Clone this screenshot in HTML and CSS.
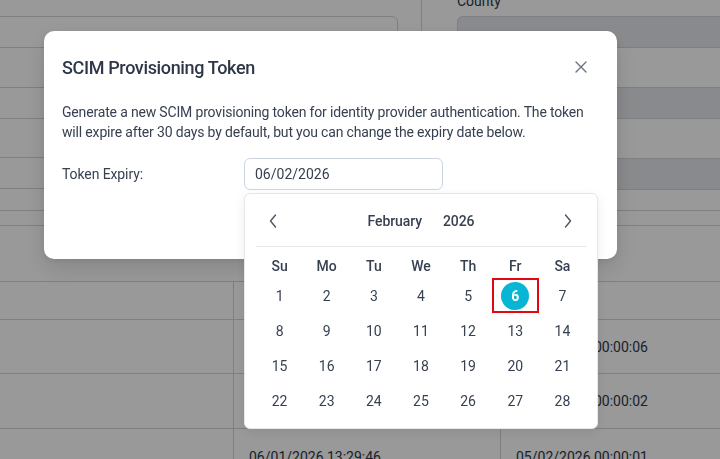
FILE: index.html
```html
<!DOCTYPE html>
<html lang="en">
<head>
<meta charset="utf-8">
<title>SCIM Provisioning Token</title>
<link rel="stylesheet" href="styles.css">
</head>
<body>
<div class="page">
  <section class="form">
    <div class="col col-left">
      <div class="field"></div>
      <div class="field"></div>
      <div class="field"></div>
    </div>
    <div class="col col-right">
      <label class="lbl">County</label>
      <div class="field disabled"></div>
      <label class="lbl">State</label>
      <div class="field disabled"></div>
      <label class="lbl">Country</label>
      <div class="field disabled"></div>
    </div>
  </section>
  <div class="band"></div>
  <div class="toolbar"></div>
  <div class="table">
    <div class="row head"><div class="cell"></div><div class="cell"></div><div class="cell"></div></div>
    <div class="row"><div class="cell"></div><div class="cell"></div><div class="cell">05/02/2026 00:00:06</div></div>
    <div class="row"><div class="cell"></div><div class="cell"></div><div class="cell">05/02/2026 00:00:02</div></div>
    <div class="row"><div class="cell"></div><div class="cell">06/01/2026 13:29:46</div><div class="cell">05/02/2026 00:00:01</div></div>
  </div>
</div>

<div class="overlay">
  <div class="modal">
    <div class="modal-head">
      <h2 class="modal-title">SCIM Provisioning Token</h2>
      <button class="close" aria-label="Close">
        <svg width="12" height="12" viewBox="0 0 12 12"><path d="M1 1L11 11M11 1L1 11" stroke="#6b7280" stroke-width="1.4" stroke-linecap="round"/></svg>
      </button>
    </div>
    <div class="modal-body">
      <p class="desc">Generate a new SCIM provisioning token for identity provider authentication. The token will expire after 30 days by default, but you can change the expiry date below.</p>
      <div class="expiry">
        <span class="expiry-label">Token Expiry:</span>
        <div class="picker">
          <div class="date-input">06/02/2026</div>
          <div class="calendar">
            <div class="cal-head">
              <span class="nav">
                <svg width="8" height="14" viewBox="0 0 8 14"><path d="M6.5 1L1.5 7L6.5 13" fill="none" stroke="#4b5563" stroke-width="1.4" stroke-linecap="round" stroke-linejoin="round"/></svg>
              </span>
              <div class="cal-title"><span>February</span><span>2026</span></div>
              <span class="nav">
                <svg width="8" height="14" viewBox="0 0 8 14"><path d="M1.5 1L6.5 7L1.5 13" fill="none" stroke="#4b5563" stroke-width="1.4" stroke-linecap="round" stroke-linejoin="round"/></svg>
              </span>
            </div>
            <div class="cal-grid">
              <span class="wd">Su</span><span class="wd">Mo</span><span class="wd">Tu</span><span class="wd">We</span><span class="wd">Th</span><span class="wd">Fr</span><span class="wd">Sa</span>
              <span class="d">1</span><span class="d">2</span><span class="d">3</span><span class="d">4</span><span class="d">5</span><span class="d sel"><b>6</b></span><span class="d">7</span>
              <span class="d">8</span><span class="d">9</span><span class="d">10</span><span class="d">11</span><span class="d">12</span><span class="d">13</span><span class="d">14</span>
              <span class="d">15</span><span class="d">16</span><span class="d">17</span><span class="d">18</span><span class="d">19</span><span class="d">20</span><span class="d">21</span>
              <span class="d">22</span><span class="d">23</span><span class="d">24</span><span class="d">25</span><span class="d">26</span><span class="d">27</span><span class="d">28</span>
            </div>
          </div>
        </div>
      </div>
    </div>
  </div>
</div>
</body>
</html>
```
FILE: styles.css
```css
* { box-sizing: border-box; }
html, body { margin: 0; padding: 0; }
body {
  width: 720px;
  height: 459px;
  overflow: hidden;
  background: #ffffff;
  font-family: Roboto, "Liberation Sans", sans-serif;
  font-size: 14px;
  color: #2d3748;
}

/* ---------- background page ---------- */
.page { width: 720px; }

.form {
  display: grid;
  grid-template-columns: 421px 1fr;
  height: 211px;
  border-bottom: 1px solid #d1d5db;
}
.col-left {
  display: flex;
  flex-direction: column;
  gap: 38.5px;
  padding-top: 16px;
  margin-left: -20px;
  width: 418px;
}
.col-right {
  display: flex;
  flex-direction: column;
  border-left: 1px solid #d4d7dd;
  padding-left: 35px;
  margin-top: -9px;
}
.lbl {
  line-height: 20px;
  height: 20px;
  margin-bottom: 5px;
  color: #2d3748;
}
.col-right .field + .lbl { margin-top: 14px; }
.field {
  height: 32px;
  border: 1px solid #d1d5db;
  border-radius: 6px;
  background: #fff;
}
.field.disabled {
  background: #e5e7eb;
  border-color: #d1d5db;
  border-radius: 6px 0 0 6px;
  border-right: none;
}
.band {
  height: 15px;
  border-bottom: 1px solid #d1d5db;
}
.toolbar { height: 55px; }
.table { border-top: 1px solid #d1d5db; }
.row {
  display: grid;
  grid-template-columns: 233px 267px 1fr;
  height: 54px;
  border-bottom: 1px solid #d1d5db;
}
.row.head { height: 38px; }
.row:nth-child(3) { height: 55px; }
.cell {
  padding: 0 15px;
  display: flex;
  align-items: center;
  border-left: 1px solid #d1d5db;
  color: #2d3748;
  white-space: nowrap;
}
.cell:first-child { border-left: none; }
.row:last-child .cell { padding-top: 2px; }

/* ---------- overlay + modal ---------- */
.overlay {
  position: fixed;
  inset: 0;
  background: rgba(0, 0, 0, 0.4);
  padding: 31px 0 0 44px;
}
.modal {
  width: 573px;
  height: 228px;
  background: #fff;
  border-radius: 10px;
  box-shadow: 0 10px 25px rgba(0, 0, 0, 0.12), 0 2px 6px rgba(0, 0, 0, 0.08);
}
.modal-head {
  display: flex;
  align-items: flex-start;
  justify-content: space-between;
  padding: 26px 24px 0 18px;
  height: 48px;
}
.modal-title {
  margin: 0;
  font-size: 18px;
  line-height: 22px;
  font-weight: 500;
  letter-spacing: -0.35px;
  color: #2d3748;
}
.close {
  width: 24px;
  height: 22px;
  padding: 0;
  margin-top: -1px;
  border: none;
  background: none;
  display: flex;
  align-items: center;
  justify-content: center;
}
.modal-body { padding: 23px 18px 0; }
.desc {
  margin: 0;
  line-height: 20px;
  letter-spacing: -0.17px;
  color: #374151;
}
.expiry {
  display: flex;
  align-items: center;
  margin-top: 16px;
}
.expiry-label {
  width: 182px;
  color: #374151;
  letter-spacing: -0.1px;
}
.picker { position: relative; }
.date-input {
  width: 199px;
  height: 32px;
  border: 1px solid #cbd5e1;
  border-radius: 6px;
  padding: 0 10px;
  display: flex;
  align-items: center;
  color: #374151;
}

/* ---------- calendar popup ---------- */
.calendar {
  position: absolute;
  top: 35px;
  left: 0;
  width: 354px;
  height: 236px;
  background: #fff;
  border: 1px solid #e5e7eb;
  border-radius: 6px;
  box-shadow: 0 4px 12px rgba(0, 0, 0, 0.08);
  padding: 13px 11px 0;
  z-index: 2;
}
.cal-head {
  display: flex;
  align-items: center;
  justify-content: space-between;
  height: 28px;
  padding: 0 14px 0 13px;
  margin-bottom: 11px;
}
.nav {
  width: 8px;
  display: flex;
  align-items: center;
  justify-content: center;
}
.cal-title {
  display: flex;
  gap: 21px;
  font-weight: 500;
  color: #374151;
  letter-spacing: -0.1px;
  margin-left: 1px;
}
.cal-grid {
  border-top: 1px solid #e5e7eb;
  padding-top: 7px;
  display: grid;
  grid-template-columns: repeat(7, 1fr);
  grid-template-rows: 24px repeat(4, 35px);
}
.wd {
  display: flex;
  align-items: center;
  justify-content: center;
  font-weight: 500;
  color: #374151;
}
.d {
  display: flex;
  align-items: center;
  justify-content: center;
  color: #374151;
}
.d.sel {
  outline: 2px solid #e30613;
  outline-offset: -2px;
}
.d.sel b {
  width: 28px;
  height: 28px;
  border-radius: 50%;
  background: #06b6d4;
  color: #fff;
  font-weight: 700;
  display: flex;
  align-items: center;
  justify-content: center;
}
```
